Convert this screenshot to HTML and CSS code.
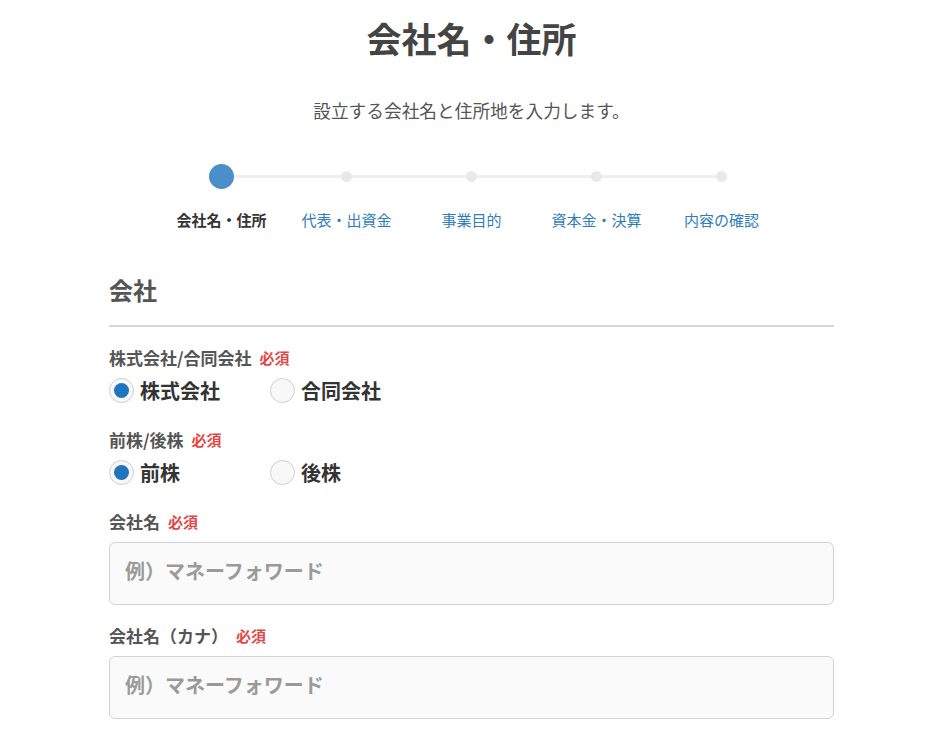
FILE: index.html
```html
<!DOCTYPE html>
<html lang="ja">
<head>
<meta charset="utf-8">
<title>会社名・住所</title>
<link rel="stylesheet" href="styles.css">
</head>
<body>
<div class="page">
  <h1 class="title">会社名・住所</h1>
  <p class="lead">設立する会社名と住所地を入力します。</p>

  <div class="stepper">
    <div class="track">
      <span class="dot-box"><span class="dot dot-active"></span></span>
      <span class="gap"></span>
      <span class="dot-box"><span class="dot"></span></span>
      <span class="gap"></span>
      <span class="dot-box"><span class="dot"></span></span>
      <span class="gap"></span>
      <span class="dot-box"><span class="dot"></span></span>
      <span class="gap"></span>
      <span class="dot-box"><span class="dot"></span></span>
    </div>
    <div class="step-labels">
      <span class="step-label step-current">会社名・住所</span>
      <a class="step-label" href="#">代表・出資金</a>
      <a class="step-label" href="#">事業目的</a>
      <a class="step-label" href="#">資本金・決算</a>
      <a class="step-label" href="#">内容の確認</a>
    </div>
  </div>

  <form class="form">
    <h2 class="section-title">会社</h2>

    <div class="field">
      <div class="field-label">株式会社/合同会社<span class="req">必須</span></div>
      <div class="radios">
        <label class="radio"><span class="radio-mark checked"></span><span class="radio-text">株式会社</span></label>
        <label class="radio"><span class="radio-mark"></span><span class="radio-text">合同会社</span></label>
      </div>
    </div>

    <div class="field">
      <div class="field-label">前株/後株<span class="req">必須</span></div>
      <div class="radios">
        <label class="radio"><span class="radio-mark checked"></span><span class="radio-text">前株</span></label>
        <label class="radio"><span class="radio-mark"></span><span class="radio-text">後株</span></label>
      </div>
    </div>

    <div class="field">
      <div class="field-label">会社名<span class="req">必須</span></div>
      <input class="text-input" type="text" placeholder="例）マネーフォワード">
    </div>

    <div class="field field-last">
      <div class="field-label">会社名（カナ）<span class="req">必須</span></div>
      <input class="text-input" type="text" placeholder="例）マネーフォワード">
    </div>
  </form>
</div>
</body>
</html>
```

FILE: styles.css
```css
* { box-sizing: border-box; }

html, body {
  margin: 0;
  padding: 0;
  background: #fff;
}

body {
  font-family: "Noto Sans CJK JP", "Noto Sans", "Liberation Sans", sans-serif;
  color: #333;
}

.page {
  width: 725px;
  margin: 0 auto;
  padding-top: 18px;
}

.title {
  margin: 0;
  text-align: center;
  font-size: 35px;
  line-height: 40px;
  font-weight: 700;
  color: #444;
}

.lead {
  margin: 40px 0 0;
  text-align: center;
  font-size: 17.7px;
  line-height: 24px;
  color: #555;
}

.stepper {
  margin-top: 42px;
  display: flex;
  flex-direction: column;
  align-items: center;
}

.track {
  width: 525px;
  height: 25px;
  display: flex;
  align-items: center;
  background: linear-gradient(#efefef, #efefef) no-repeat center / 500px 3px;
}

.dot-box {
  width: 25px;
  height: 25px;
  flex: none;
  display: flex;
  align-items: center;
  justify-content: center;
}

.gap {
  flex: 1;
}

.dot {
  width: 11px;
  height: 11px;
  border-radius: 50%;
  background: #e9e9e9;
}

.dot-active {
  width: 25px;
  height: 25px;
  background: #4a8fc9;
}

.step-labels {
  margin-top: 21px;
  display: flex;
  width: 625px;
}

.step-label {
  width: 125px;
  text-align: center;
  font-size: 15px;
  line-height: 20px;
  color: #2f7dbd;
  text-decoration: none;
}

.step-current {
  color: #333;
  font-weight: 700;
}

.form {
  margin-top: 44px;
}

.section-title {
  margin: 0;
  font-size: 24px;
  line-height: 32px;
  font-weight: 700;
  color: #555;
  padding-bottom: 19px;
  border-bottom: 2px solid #d6d6d6;
}

.field {
  margin-top: 21px;
}

.field + .field {
  margin-top: 27px;
}

.field-last {
  margin-top: 21px !important;
}

.field-label {
  font-size: 17px;
  line-height: 20px;
  font-weight: 700;
  color: #555;
  display: flex;
  align-items: center;
}

.req {
  margin-left: 8px;
  font-size: 15px;
  font-weight: 700;
  color: #e24646;
}

.radios {
  margin-top: 10px;
  display: flex;
  height: 25px;
}

.radio {
  width: 161px;
  display: flex;
  align-items: center;
  gap: 6px;
  cursor: pointer;
}

.radio-mark {
  width: 25px;
  height: 25px;
  flex: none;
  border-radius: 50%;
  border: 1px solid #cfcfcf;
  background: #f8f8f8;
  display: flex;
  align-items: center;
  justify-content: center;
}

.radio-mark.checked::after {
  content: "";
  width: 15px;
  height: 15px;
  border-radius: 50%;
  background: #1f74bd;
}

.radio-text {
  font-size: 20px;
  line-height: 25px;
  font-weight: 700;
  color: #333;
}

.text-input {
  display: block;
  margin-top: 10px;
  width: 100%;
  height: 63px;
  padding: 0 15px 6px;
  border: 1px solid #d3d3d3;
  border-radius: 6px;
  background: #fafafa;
  font-family: inherit;
  font-size: 20px;
  font-weight: 700;
  color: #333;
  outline: none;
}

.text-input::placeholder {
  color: #9a9a9a;
  font-weight: 700;
}
```
